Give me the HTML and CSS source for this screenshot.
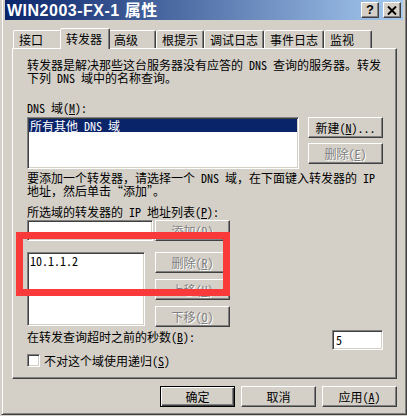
FILE: index.html
```html
<!DOCTYPE html>
<html lang="zh-CN">
<head>
<meta charset="utf-8">
<title>WIN2003-FX-1 属性</title>
<link rel="stylesheet" href="styles.css">
</head>
<body>
<div class="window">
  <div class="titlebar">
    <span class="title">WIN2003-FX-1 属性</span>
    <div class="caps">
      <div class="cap help">?</div>
      <div class="cap close">
        <svg width="10" height="9" viewBox="0 0 10 9"><path d="M1 0.5 L9 8.5 M9 0.5 L1 8.5" stroke="#000" stroke-width="2" fill="none"/></svg>
      </div>
    </div>
  </div>

  <div class="tabs">
    <div class="tab t1">接口</div>
    <div class="tab sel t2">转发器</div>
    <div class="tab t3">高级</div>
    <div class="tab t4">根提示</div>
    <div class="tab t5">调试日志</div>
    <div class="tab t6">事件日志</div>
    <div class="tab t7">监视</div>
  </div>

  <div class="panel">
    <p class="desc">转发器是解决那些这台服务器没有应答的 DNS 查询的服务器。转发<br>下列 DNS 域中的名称查询。</p>
    <div class="label l1">DNS 域(<u>M</u>):</div>
    <div class="row r1">
      <div class="sunken list dnslist">
        <div class="item sel">所有其他 DNS 域</div>
      </div>
      <div class="btncol col1">
        <div class="btn">新建(<u>N</u>)...</div>
        <div class="btn dis">删除(<u>E</u>)</div>
      </div>
    </div>
    <p class="desc d2">要添加一个转发器，请选择一个 DNS 域，在下面键入转发器的 IP<br>地址，然后单击“添加”。</p>
    <div class="label l2">所选域的转发器的 IP 地址列表(<u>P</u>):</div>
    <div class="row r2">
      <div class="sunken ipinput"></div>
      <div class="btn dis">添加(<u>D</u>)</div>
    </div>
    <div class="row r3">
      <div class="sunken list iplist">
        <div class="item">10.1.1.2</div>
      </div>
      <div class="btncol col2">
        <div class="btn dis">删除(<u>R</u>)</div>
        <div class="btn dis">上移(<u>U</u>)</div>
        <div class="btn dis">下移(<u>O</u>)</div>
      </div>
    </div>
    <div class="row r4">
      <div class="label">在转发查询超时之前的秒数(<u>B</u>):</div>
      <div class="sunken secs">5</div>
    </div>
    <div class="row r5">
      <div class="sunken check"></div>
      <div class="label">不对这个域使用递归(<u>S</u>)</div>
    </div>
    <div class="highlight"></div>
  </div>

  <div class="footer">
    <div class="btn def">确定</div>
    <div class="btn">取消</div>
    <div class="btn">应用(<u>A</u>)</div>
  </div>
</div>
</body>
</html>
```

FILE: styles.css
```css
* { box-sizing: border-box; }
html, body { margin: 0; padding: 0; }
body {
  width: 407px;
  height: 416px;
  overflow: hidden;
  background: #d4d0c8;
  color: #000;
  font-family: "Noto Sans Mono CJK SC", "Noto Sans CJK SC", sans-serif;
  font-size: 12px;
  line-height: 13px;
}
u { text-decoration: underline; text-underline-offset: 1px; }

.window {
  margin-left: 1px;
  width: 406px;
  height: 415px;
  background: #d4d0c8;
  border: 1px solid;
  border-top: 0;
  border-color: #d4d0c8 #404040 #404040 #d4d0c8;
  box-shadow: inset 1px 0 #fff, inset -1px -1px #808080;
  padding: 0 3px 3px 3px;
  display: flex;
  flex-direction: column;
}

.titlebar {
  height: 20px;
  flex: none;
  background: linear-gradient(to right, #0a246a, #a6caf0);
  display: flex;
  align-items: center;
  justify-content: space-between;
  padding: 0 2px;
}
.title {
  color: #fff;
  font-family: "Liberation Sans", "Noto Sans CJK SC", sans-serif;
  font-weight: bold;
  font-size: 16px;
  letter-spacing: 0.5px;
  line-height: 20px;
  padding-top: 1px;
  white-space: nowrap;
}
.caps { display: flex; gap: 4px; }
.cap {
  width: 18px;
  height: 16px;
  background: #d4d0c8;
  border: 1px solid;
  border-color: #fff #404040 #404040 #fff;
  box-shadow: inset -1px -1px #808080;
  display: flex;
  align-items: center;
  justify-content: center;
}
.help {
  font-family: "Liberation Sans", sans-serif;
  font-weight: bold;
  font-size: 13px;
  line-height: 14px;
}

.tabs {
  margin: 8px 0 0 8px;
  height: 20px;
  flex: none;
  display: flex;
  align-items: flex-end;
}
.tab {
  height: 18px;
  background: #d4d0c8;
  border: 1px solid;
  border-bottom: 0;
  border-color: #fff #404040 transparent #fff;
  box-shadow: inset -1px 0 #808080;
  border-radius: 2px 2px 0 0;
  padding: 2px 0 0 5px;
  white-space: nowrap;
}
.t1 { width: 49px; }
.t2 { width: 46px; }
.t3 { width: 48px; }
.t4 { width: 48px; }
.t5 { width: 60px; }
.t6 { width: 60px; }
.t7 { width: 48px; }
.tab.sel {
  width: 50px;
  height: 21px;
  margin: 0 -2px -1px;
  padding-top: 3px;
  position: relative;
  z-index: 1;
}

.panel {
  position: relative;
  flex: none;
  margin: 0 6px 0 7px;
  height: 331px;
  border: 1px solid;
  border-color: #fff #404040 #404040 #fff;
  box-shadow: inset -1px -1px #808080;
  padding: 0 13px 0 14px;
}
.desc { margin: 9px 0 0; white-space: nowrap; }
.desc.d2 { margin-top: 2px; }
.label { white-space: nowrap; }
.l1 { margin-top: 17px; }
.l2 { margin-top: 8px; }

.row { display: flex; }
.r1 { margin-top: 3px; gap: 9px; }
.r2 { margin-top: 2px; gap: 2px; }
.r3 { margin-top: 11px; gap: 10px; }
.r4 { margin-top: 3px; justify-content: space-between; align-items: flex-start; }
.r5 { margin-top: 4px; gap: 4px; align-items: center; }

.sunken {
  background: #fff;
  border: 1px solid;
  border-color: #808080 #fff #fff #808080;
  box-shadow: inset 1px 1px #404040, inset -1px -1px #d4d0c8;
}
.list { padding: 1px; }
.dnslist { width: 272px; height: 52px; }
.iplist { width: 118px; height: 74px; }
.item { height: 13px; line-height: 13px; padding-left: 1px; white-space: nowrap; }
.item.sel { background: #0a246a; color: #fff; }
.ipinput { width: 126px; height: 21px; }
.secs { width: 51px; height: 20px; padding: 2px 0 0 3px; }
.check { width: 13px; height: 13px; }

.btncol { display: flex; flex-direction: column; }
.col1 { gap: 5px; }
.col2 { gap: 6px; }

.btn {
  width: 75px;
  height: 21px;
  flex: none;
  background: #d4d0c8;
  border: 1px solid;
  border-color: #fff #404040 #404040 #fff;
  box-shadow: inset -1px -1px #808080;
  display: flex;
  align-items: center;
  justify-content: center;
  white-space: nowrap;
}
.btn.dis { color: #808080; text-shadow: 1px 1px 0 #fff; }
.btn.def {
  border-color: #000;
  box-shadow: inset 1px 1px #fff, inset -1px -1px #404040, inset -2px -2px #808080;
}

.footer {
  margin: 7px 6px 0 0;
  display: flex;
  justify-content: flex-end;
  gap: 6px;
}

.highlight {
  position: absolute;
  left: 3px;
  top: 183px;
  width: 214px;
  height: 64px;
  border: 7px solid #fa3a3a;
}
```
